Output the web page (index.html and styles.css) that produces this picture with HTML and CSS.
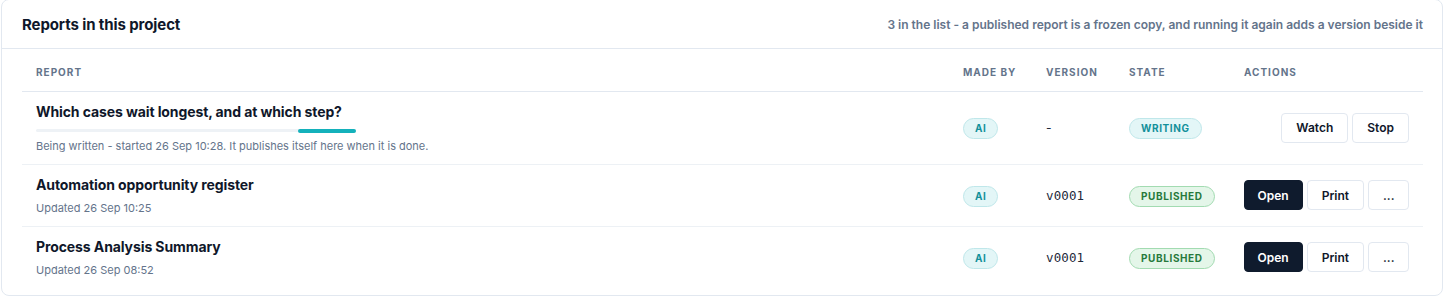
FILE: index.html
```html
<!DOCTYPE html>
<html lang="en">
<head>
    <meta charset="UTF-8">
    <meta name="viewport" content="width=device-width, initial-scale=1.0">
    <title>Reports</title>
    <link rel="stylesheet" href="styles.css">
</head>
<body>
    <div class="card">
        <div class="card-head">
            <h2>Reports in this project</h2>
            <div class="note">3 in the list - a published report is a frozen copy, and running it again adds a version beside it</div>
        </div>
        <div class="card-body">
            <table>
                <thead>
                    <tr>
                        <th class="c-report">Report</th>
                        <th class="c-by">Made by</th>
                        <th class="c-ver">Version</th>
                        <th class="c-state">State</th>
                        <th class="c-act">Actions</th>
                    </tr>
                </thead>
                <tbody>
                    <tr class="row-tall">
                        <td>
                            <div class="title">Which cases wait longest, and at which step?</div>
                            <div class="progress"><div class="bar"></div></div>
                            <div class="sub">Being written - started 26 Sep 10:28. It publishes itself here when it is done.</div>
                        </td>
                        <td><span class="pill teal">AI</span></td>
                        <td class="ver">-</td>
                        <td><span class="pill teal">WRITING</span></td>
                        <td>
                            <div class="actions">
                                <button class="btn">Watch</button>
                                <button class="btn">Stop</button>
                            </div>
                        </td>
                    </tr>
                    <tr>
                        <td>
                            <div class="title">Automation opportunity register</div>
                            <div class="sub">Updated 26 Sep 10:25</div>
                        </td>
                        <td><span class="pill teal">AI</span></td>
                        <td class="ver mono">v0001</td>
                        <td><span class="pill green">PUBLISHED</span></td>
                        <td>
                            <div class="actions">
                                <button class="btn dark">Open</button>
                                <button class="btn">Print</button>
                                <button class="btn more">...</button>
                            </div>
                        </td>
                    </tr>
                    <tr>
                        <td>
                            <div class="title">Process Analysis Summary</div>
                            <div class="sub">Updated 26 Sep 08:52</div>
                        </td>
                        <td><span class="pill teal">AI</span></td>
                        <td class="ver mono">v0001</td>
                        <td><span class="pill green">PUBLISHED</span></td>
                        <td>
                            <div class="actions">
                                <button class="btn dark">Open</button>
                                <button class="btn">Print</button>
                                <button class="btn more">...</button>
                            </div>
                        </td>
                    </tr>
                </tbody>
            </table>
        </div>
    </div>
</body>
</html>
```

FILE: styles.css
```css
*{
    box-sizing: border-box;
}
body{
    margin: 0;
    padding: 0 5px 0 1px;
    background: #fff;
    font-family: Inter, "Noto Sans", sans-serif;
    color: #0f172a;
}
.card{
    border: 1px solid #e2e8f0;
    border-radius: 8px;
    background: #fff;
    height: 297px;
    margin-top: -1px;
}
.card-head{
    display: flex;
    align-items: center;
    justify-content: space-between;
    height: 49px;
    padding: 0 19px 0 20px;
    border-bottom: 1px solid #e2e8f0;
}
.card-head h2{
    margin: 0;
    font-size: 15px;
    font-weight: 700;
    letter-spacing: -0.1px;
}
.note{
    font-size: 12px;
    font-weight: 600;
    color: #64748b;
}
.card-body{
    padding: 0 19px 0 20px;
}
table{
    width: 100%;
    border-collapse: collapse;
    table-layout: fixed;
}
th{
    text-align: left;
    font-size: 10px;
    font-weight: 700;
    letter-spacing: 1px;
    text-transform: uppercase;
    color: #64748b;
    height: 42px;
    padding: 5px 14px 0;
    border-bottom: 1px solid #e2e8f0;
}
.c-by, .c-ver{
    width: 83px;
}
.c-state{
    width: 115px;
}
.c-act{
    width: 193px;
}
td{
    padding: 0 14px;
    height: 62px;
    border-bottom: 1px solid #edf1f5;
    vertical-align: middle;
}
tbody tr:last-child td{
    border-bottom: 0;
}
.row-tall td{
    height: 73px;
}
.title{
    font-size: 14px;
    font-weight: 700;
    color: #0f172a;
    letter-spacing: -0.1px;
}
.sub{
    font-size: 11px;
    color: #64748b;
    margin-top: 8px;
}
.row-tall .sub{
    margin-top: 7px;
}
.progress{
    width: 320px;
    height: 3px;
    border-radius: 2px;
    background: #eef2f6;
    margin-top: 9px;
    position: relative;
}
.bar{
    position: absolute;
    left: 262px;
    top: 0;
    width: 58px;
    height: 4px;
    border-radius: 2px;
    background: #14b1bb;
}
.pill{
    display: inline-block;
    font-size: 10px;
    font-weight: 700;
    letter-spacing: 0.6px;
    height: 21px;
    line-height: 19px;
    padding: 0 11px;
    border-radius: 11px;
    border: 1px solid;
}
.teal{
    background: #e3f6f7;
    border-color: #bfe7ea;
    color: #12909b;
}
.green{
    background: #e4f6e9;
    border-color: #a2dbb1;
    color: #27793c;
}
.ver{
    font-size: 12px;
    color: #1e293b;
}
.mono{
    font-family: "DejaVu Sans Mono", monospace;
    font-size: 12.5px;
    letter-spacing: 0.1px;
}
.actions{
    display: flex;
    justify-content: flex-end;
    gap: 4px;
}
button{
    font-family: inherit;
}
.btn{
    height: 30px;
    padding: 0 14px;
    border: 1px solid #e2e8f0;
    border-radius: 4px;
    background: #fff;
    font-size: 12px;
    font-weight: 600;
    color: #0f172a;
    cursor: pointer;
}
.btn.dark{
    background: #0f1b2d;
    border-color: #0f1b2d;
    color: #fff;
    padding: 0 13px;
}
.btn.more{
    width: 41px;
}
```
